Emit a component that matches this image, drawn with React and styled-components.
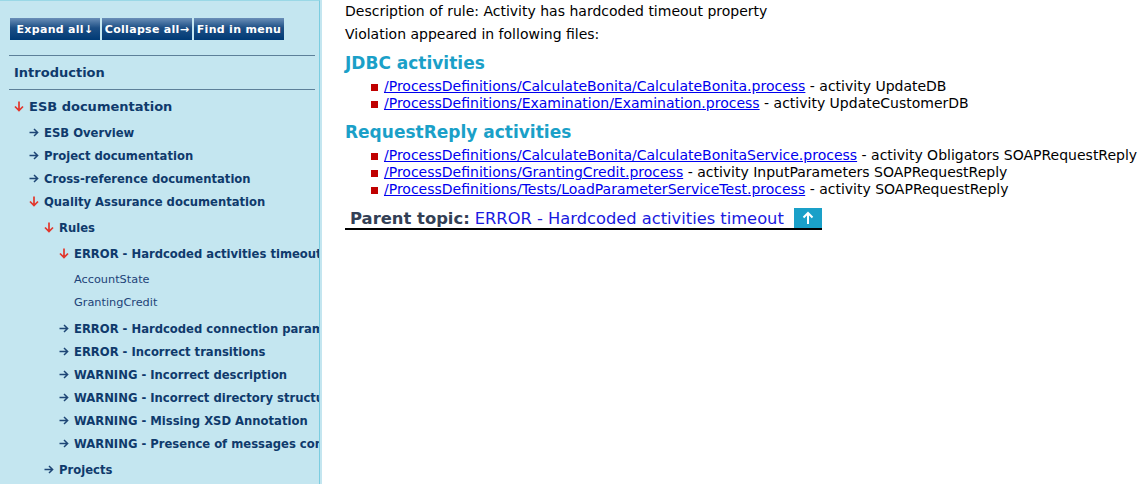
import React from 'react';
import styled, { createGlobalStyle } from 'styled-components';

const GlobalStyle = createGlobalStyle`
  html, body {
    margin: 0;
    padding: 0;
    background: #ffffff;
    font-family: 'DejaVu Sans', Verdana, sans-serif;
  }
`;

const tree = [
  {
    label: 'ESB documentation',
    open: true,
    children: [
      { label: 'ESB Overview' },
      { label: 'Project documentation' },
      { label: 'Cross-reference documentation' },
      {
        label: 'Quality Assurance documentation',
        open: true,
        children: [
          {
            label: 'Rules',
            open: true,
            children: [
              {
                label: 'ERROR - Hardcoded activities timeout',
                open: true,
                children: [
                  { label: 'AccountState', leaf: true },
                  { label: 'GrantingCredit', leaf: true },
                ],
              },
              { label: 'ERROR - Hardcoded connection parameters' },
              { label: 'ERROR - Incorrect transitions' },
              { label: 'WARNING - Incorrect description' },
              { label: 'WARNING - Incorrect directory structure' },
              { label: 'WARNING - Missing XSD Annotation' },
              { label: 'WARNING - Presence of messages content' },
            ],
          },
          { label: 'Projects' },
        ],
      },
    ],
  },
];

const jdbc = [
  ['/ProcessDefinitions/CalculateBonita/CalculateBonita.process', 'activity UpdateDB'],
  ['/ProcessDefinitions/Examination/Examination.process', 'activity UpdateCustomerDB'],
];

const requestReply = [
  ['/ProcessDefinitions/CalculateBonita/CalculateBonitaService.process', 'activity Obligators SOAPRequestReply'],
  ['/ProcessDefinitions/GrantingCredit.process', 'activity InputParameters SOAPRequestReply'],
  ['/ProcessDefinitions/Tests/LoadParameterServiceTest.process', 'activity SOAPRequestReply'],
];

const DownArrow = () => (
  <svg width="10" height="11" viewBox="0 0 10 11">
    <path d="M5 0.5V9.5M1 5.5l4 4 4-4" fill="none" stroke="#e2362b" strokeWidth="1.7" />
  </svg>
);

const RightArrow = () => (
  <svg width="10" height="9" viewBox="0 0 10 9">
    <path d="M0.5 4.5H8.5M5 1l3.6 3.5L5 8" fill="none" stroke="#1e4676" strokeWidth="1.5" />
  </svg>
);

const TreeNode = ({ node, depth }) => (
  <li>
    <NodeRow $leaf={node.leaf} $top={depth === 0}>
      {!node.leaf && <Arrow>{node.open ? <DownArrow /> : <RightArrow />}</Arrow>}
      {node.label}
    </NodeRow>
    {node.children && (
      <SubList>
        {node.children.map((c) => (
          <TreeNode key={c.label} node={c} depth={depth + 1} />
        ))}
      </SubList>
    )}
  </li>
);

const FileList = ({ items }) => (
  <Files>
    {items.map(([href, text]) => (
      <FileItem key={href}>
        <FileLink href="#">{href}</FileLink> - {text}
      </FileItem>
    ))}
  </Files>
);

const App = () => (
  <Page>
    <GlobalStyle />
    <Sidebar>
      <Toolbar>
        <ToolButton>Expand all↓</ToolButton>
        <ToolButton>Collapse all→</ToolButton>
        <ToolButton>Find in menu</ToolButton>
      </Toolbar>
      <Intro>Introduction</Intro>
      <Tree>
        {tree.map((n) => (
          <TreeNode key={n.label} node={n} depth={0} />
        ))}
      </Tree>
    </Sidebar>
    <Content>
      <Para>Description of rule: Activity has hardcoded timeout property</Para>
      <Para>Violation appeared in following files:</Para>
      <Heading>JDBC activities</Heading>
      <FileList items={jdbc} />
      <Heading>RequestReply activities</Heading>
      <FileList items={requestReply} />
      <ParentTopic>
        <ParentLabel>Parent topic:</ParentLabel>
        <ParentLink href="#">ERROR - Hardcoded activities timeout</ParentLink>
        <UpButton>
          <svg width="12" height="14" viewBox="0 0 12 14">
            <path d="M6 13V2M1.5 6.5L6 2l4.5 4.5" fill="none" stroke="#fff" strokeWidth="2" />
          </svg>
        </UpButton>
      </ParentTopic>
    </Content>
  </Page>
);

export default App;

const Page = styled.div`
  display: flex;
  height: 484px;
  overflow: hidden;
`;

const Sidebar = styled.nav`
  flex: 0 0 320px;
  height: 100%;
  box-sizing: border-box;
  background: #c4e6f0;
  border-top: 1px solid #9ad8e6;
  border-right: 1px solid #7ccde0;
  box-shadow: 2px 0 0 #c4e6f0;
  padding: 17px 0 0 9px;
  overflow: hidden;
`;

const Toolbar = styled.div`
  display: flex;
  gap: 2px;
  padding: 0 0 0 1px;
  margin-bottom: 15px;
`;

const ToolButton = styled.button`
  height: 22px;
  width: 90px;
  padding: 0;
  border: none;
  background: linear-gradient(#6a8fb8 0%, #1d4f85 45%, #003a75 100%);
  color: #ffffff;
  font-family: 'DejaVu Sans', Verdana, sans-serif;
  font-size: 11px;
  font-weight: bold;
  letter-spacing: 0.3px;
  white-space: nowrap;
  overflow: hidden;
`;

const Intro = styled.div`
  width: 301px;
  height: 33px;
  border-top: 1px solid #5d8099;
  border-bottom: 1px solid #5d8099;
  padding-left: 5px;
  box-sizing: content-box;
  line-height: 33px;
  font-size: 13px;
  font-weight: bold;
  color: #0f3a6c;
`;

const Tree = styled.ul`
  list-style: none;
  margin: 0;
  padding: 5px 0 0 5px;
  white-space: nowrap;
`;

const SubList = styled.ul`
  list-style: none;
  margin: 3px 0;
  padding: 0 0 0 15px;
`;

const NodeRow = styled.div`
  display: flex;
  align-items: center;
  height: 23px;
  font-size: ${(p) => (p.$leaf ? '11.3px' : p.$top ? '13px' : '11.6px')};
  font-weight: ${(p) => (p.$leaf ? 'normal' : 'bold')};
  color: ${(p) => (p.$leaf ? '#1d4378' : '#0f3a6c')};
`;

const Arrow = styled.span`
  display: inline-flex;
  align-items: center;
  flex: 0 0 15px;
  width: 15px;
`;

const Content = styled.main`
  flex: 1;
  padding: 1px 0 0 25px;
  font-size: 14px;
  color: #000;
  white-space: nowrap;
`;

const Para = styled.p`
  margin: 0;
  height: 23px;
  line-height: 20px;
`;

const Heading = styled.h2`
  margin: 6px 0 0;
  font-size: 17px;
  font-weight: bold;
  color: #1aa0c8;
  line-height: 20px;
`;

const Files = styled.ul`
  list-style: none;
  margin: 5px 0 10px;
  padding: 0 0 0 26px;
`;

const FileItem = styled.li`
  position: relative;
  padding-left: 13px;
  line-height: 17px;

  &:before {
    content: '';
    position: absolute;
    left: 0;
    top: 6px;
    width: 7px;
    height: 7px;
    background: #c00000;
  }
`;

const FileLink = styled.a`
  color: #0000ee;
  text-decoration: underline;
`;

const ParentTopic = styled.div`
  display: flex;
  align-items: center;
  width: fit-content;
  margin-top: 9px;
  padding-left: 5px;
  border-bottom: 2px solid #000;
  height: 20px;
`;

const ParentLabel = styled.span`
  font-size: 16.4px;
  font-weight: bold;
  color: #333f55;
  margin-right: 5px;
`;

const ParentLink = styled.a`
  font-size: 16.3px;
  color: #1a1ae0;
  text-decoration: none;
  margin-right: 10px;
`;

const UpButton = styled.span`
  display: inline-flex;
  align-items: center;
  justify-content: center;
  width: 28px;
  height: 20px;
  background: #1aa0c8;
  align-self: flex-end;
`;
